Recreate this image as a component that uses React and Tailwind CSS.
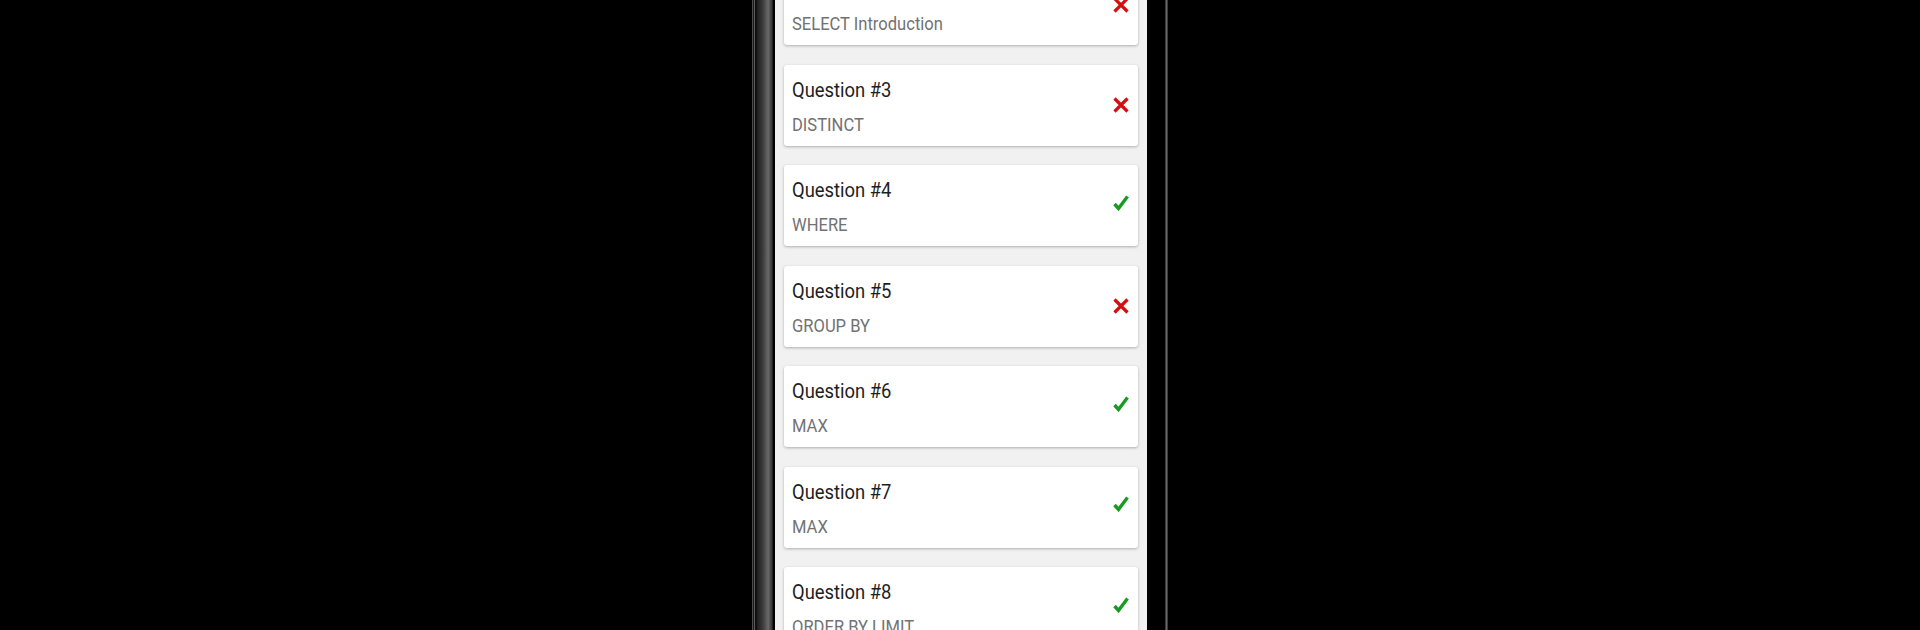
const questions = [
  { n: 2, topic: 'SELECT Introduction', ok: false },
  { n: 3, topic: 'DISTINCT', ok: false },
  { n: 4, topic: 'WHERE', ok: true },
  { n: 5, topic: 'GROUP BY', ok: false },
  { n: 6, topic: 'MAX', ok: true },
  { n: 7, topic: 'MAX', ok: true },
  { n: 8, topic: 'ORDER BY LIMIT', ok: true },
];

function WrongIcon() {
  return (
    <svg width="16" height="16" viewBox="0 0 16 16" className="block">
      <path d="M1.5 1.5 L14.5 14.5 M14.5 1.5 L1.5 14.5" stroke="#d40f0f" strokeWidth="3.2" fill="none" />
    </svg>
  );
}

function RightIcon() {
  return (
    <svg width="16" height="16" viewBox="0 0 16 16" className="block -mt-[6px]">
      <path d="M1.5 9 L5.5 13.5 L14.5 1.5" stroke="#1a9a22" strokeWidth="3.4" strokeLinejoin="miter" fill="none" />
    </svg>
  );
}

function QuestionCard({ n, topic, ok }) {
  return (
    <div className="h-[81px] shrink-0 bg-white rounded-[3px] shadow-[0_1px_3px_rgba(0,0,0,0.28)] flex items-center justify-between">
      <div className="self-start pl-[8px] pt-[13px] font-['Roboto',sans-serif]">
        <p className="text-[20px] leading-[24px] text-[#1e1e1e] whitespace-nowrap origin-left scale-x-[0.92]">
          Question #{n}
        </p>
        <p className="mt-[11px] text-[18px] leading-[24px] text-[#727272] whitespace-nowrap origin-left scale-x-[0.92]">
          {topic}
        </p>
      </div>
      <div className="pr-[9px]">{ok ? <RightIcon /> : <WrongIcon />}</div>
    </div>
  );
}

export default function App() {
  return (
    <div className="w-full h-[630px] bg-black overflow-hidden flex justify-center">
      <div className="flex h-full">
        {/* left bezel */}
        <div className="w-[26px] h-full flex">
          <div className="w-[3px] bg-black" />
          <div className="w-[1px] bg-[#4a4a4a]" />
          <div className="w-[1px] bg-[#1c1c1c]" />
          <div className="w-[1px] bg-[#5a5a5a]" />
          <div className="w-[2px] bg-[#111]" />
          <div className="w-[16px] bg-[linear-gradient(90deg,#1e1e1e_0%,#3a3a3a_35%,#6a6a6a_70%,#3c3c3c_90%,#1a1a1a_100%)]" />
          <div className="w-[2px] bg-black" />
        </div>

        {/* screen */}
        <div className="w-[372px] h-full bg-[#f1f1f1] overflow-hidden">
          <div className="mt-[-36px] px-[9px] flex flex-col gap-[19.5px]">
            {questions.map((q) => (
              <QuestionCard key={q.n} {...q} />
            ))}
          </div>
        </div>

        {/* right bezel */}
        <div className="w-[24px] h-full flex">
          <div className="w-[18px] bg-black" />
          <div className="w-[1px] bg-[#3a3a3a]" />
          <div className="w-[1px] bg-[#6a6a6a]" />
          <div className="w-[1px] bg-[#3a3a3a]" />
          <div className="w-[3px] bg-black" />
        </div>
      </div>
    </div>
  );
}
